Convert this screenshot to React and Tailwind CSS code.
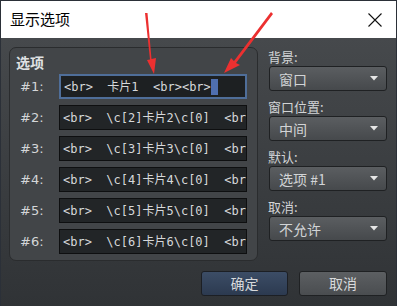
import React from "react";

const rows = [
  "<br>  卡片1  <br><br>",
  "<br>  \\c[2]卡片2\\c[0]  <br>",
  "<br>  \\c[3]卡片3\\c[0]  <br>",
  "<br>  \\c[4]卡片4\\c[0]  <br>",
  "<br>  \\c[5]卡片5\\c[0]  <br>",
  "<br>  \\c[6]卡片6\\c[0]  <br>",
];

const selects = [
  ["背景:", "窗口"],
  ["窗口位置:", "中间"],
  ["默认:", "选项 #1"],
  ["取消:", "不允许"],
];

function Select({ value }) {
  return (
    <div className="flex h-[25px] w-[118px] items-center justify-between rounded-[3px] border border-[#1f2123] bg-gradient-to-b from-[#5b5e61] to-[#46494c] pl-[9px] pr-[8px] text-[14px] text-[#d2d4d6]">
      <span className="leading-none">{value}</span>
      <svg width="8" height="5" viewBox="0 0 8 5">
        <path d="M0 0 L8 0 L4 4.5 Z" fill="#e6e6e6" />
      </svg>
    </div>
  );
}

export default function App() {
  return (
    <div
      className="relative h-[306px] w-[397px] overflow-hidden border-x border-t border-[#2b3038] bg-[#2b3038]"
      style={{ fontFamily: '"Noto Sans CJK SC", "DejaVu Sans", sans-serif' }}
    >
      <div className="flex h-[37px] items-center justify-between bg-white pl-[9px] pr-[14px]">
        <span className="text-[15px] text-black">显示选项</span>
        <svg width="14" height="14" viewBox="0 0 14 14">
          <path d="M0.5 0.5 L13.5 13.5 M13.5 0.5 L0.5 13.5" stroke="#111" strokeWidth="1.1" />
        </svg>
      </div>
      <div className="flex h-[268px] flex-col bg-gradient-to-b from-[#46494c] to-[#303336] px-[8px] pt-[9px]">
        <div className="flex gap-[10px]">
          <div className="flex h-[214px] w-[249px] flex-col rounded-[7px] border border-[#2a2c2e] bg-[#424548] pl-[6px] pt-[4px]">
            <div className="h-[21px] text-[14px] font-bold leading-[21px] text-[#dfe1e3]">选项</div>
            <div className="flex flex-col gap-[6px] pt-[1px]">
              {rows.map((t, i) => (
                <div key={i} className="flex items-center">
                  <span
                    className="w-[43px] pl-[4px] text-[13px] text-[#d4d6d8]"
                    style={{ fontFamily: '"DejaVu Sans", sans-serif' }}
                  >
                    #{i + 1}:
                  </span>
                  <div
                    className={
                      "flex h-[25px] w-[188px] items-center overflow-hidden whitespace-pre pl-[3px] text-[12px] text-[#d6d8da] " +
                      (i === 0
                        ? "border-2 border-[#4f6e99] bg-[#1d2022]"
                        : "border border-[#0e0f10] bg-[#222527]")
                    }
                    style={{ fontFamily: '"DejaVu Sans Mono", "Noto Sans CJK SC", monospace' }}
                  >
                    {t}
                    {i === 0 && <span className="inline-block h-[16px] w-[7px] bg-[#4f6fb0]" />}
                  </div>
                </div>
              ))}
            </div>
          </div>
          <div className="flex flex-col gap-[1px] pt-[0px]">
            {selects.map(([l, v], i) => (
              <div key={i} className="flex flex-col">
                <span className="h-[19px] text-[13px] leading-[19px] text-[#d2d4d6]">{l}</span>
                <div className="pl-[1px]">
                  <Select value={v} />
                </div>
                <div className="h-[5px]" />
              </div>
            ))}
          </div>
        </div>
        <div className="mt-[10px] flex justify-end gap-[11px] pr-[1px]">
          <div className="flex h-[25px] w-[87px] items-center justify-center rounded-[3px] border border-[#1c1f24] bg-gradient-to-b from-[#3c4d66] to-[#2c3a50] text-[14px] text-[#d8dadc]">
            确定
          </div>
          <div className="flex h-[25px] w-[88px] items-center justify-center rounded-[3px] border border-[#1f2123] bg-gradient-to-b from-[#5c5f62] to-[#4a4d50] text-[14px] text-[#d8dadc]">
            取消
          </div>
        </div>
      </div>
      <svg className="pointer-events-none absolute left-0 top-0" width="397" height="306">
        <path d="M144 12 L146.5 12 L150.5 58 L155 57 L153 73 L146 59 L149 58.5 Z" fill="#ec3030" />
        <path d="M270 11 L272 13 L235 62 L239 64 L223 72 L230 57 L233 60 Z" fill="#ec3030" />
      </svg>
    </div>
  );
}
